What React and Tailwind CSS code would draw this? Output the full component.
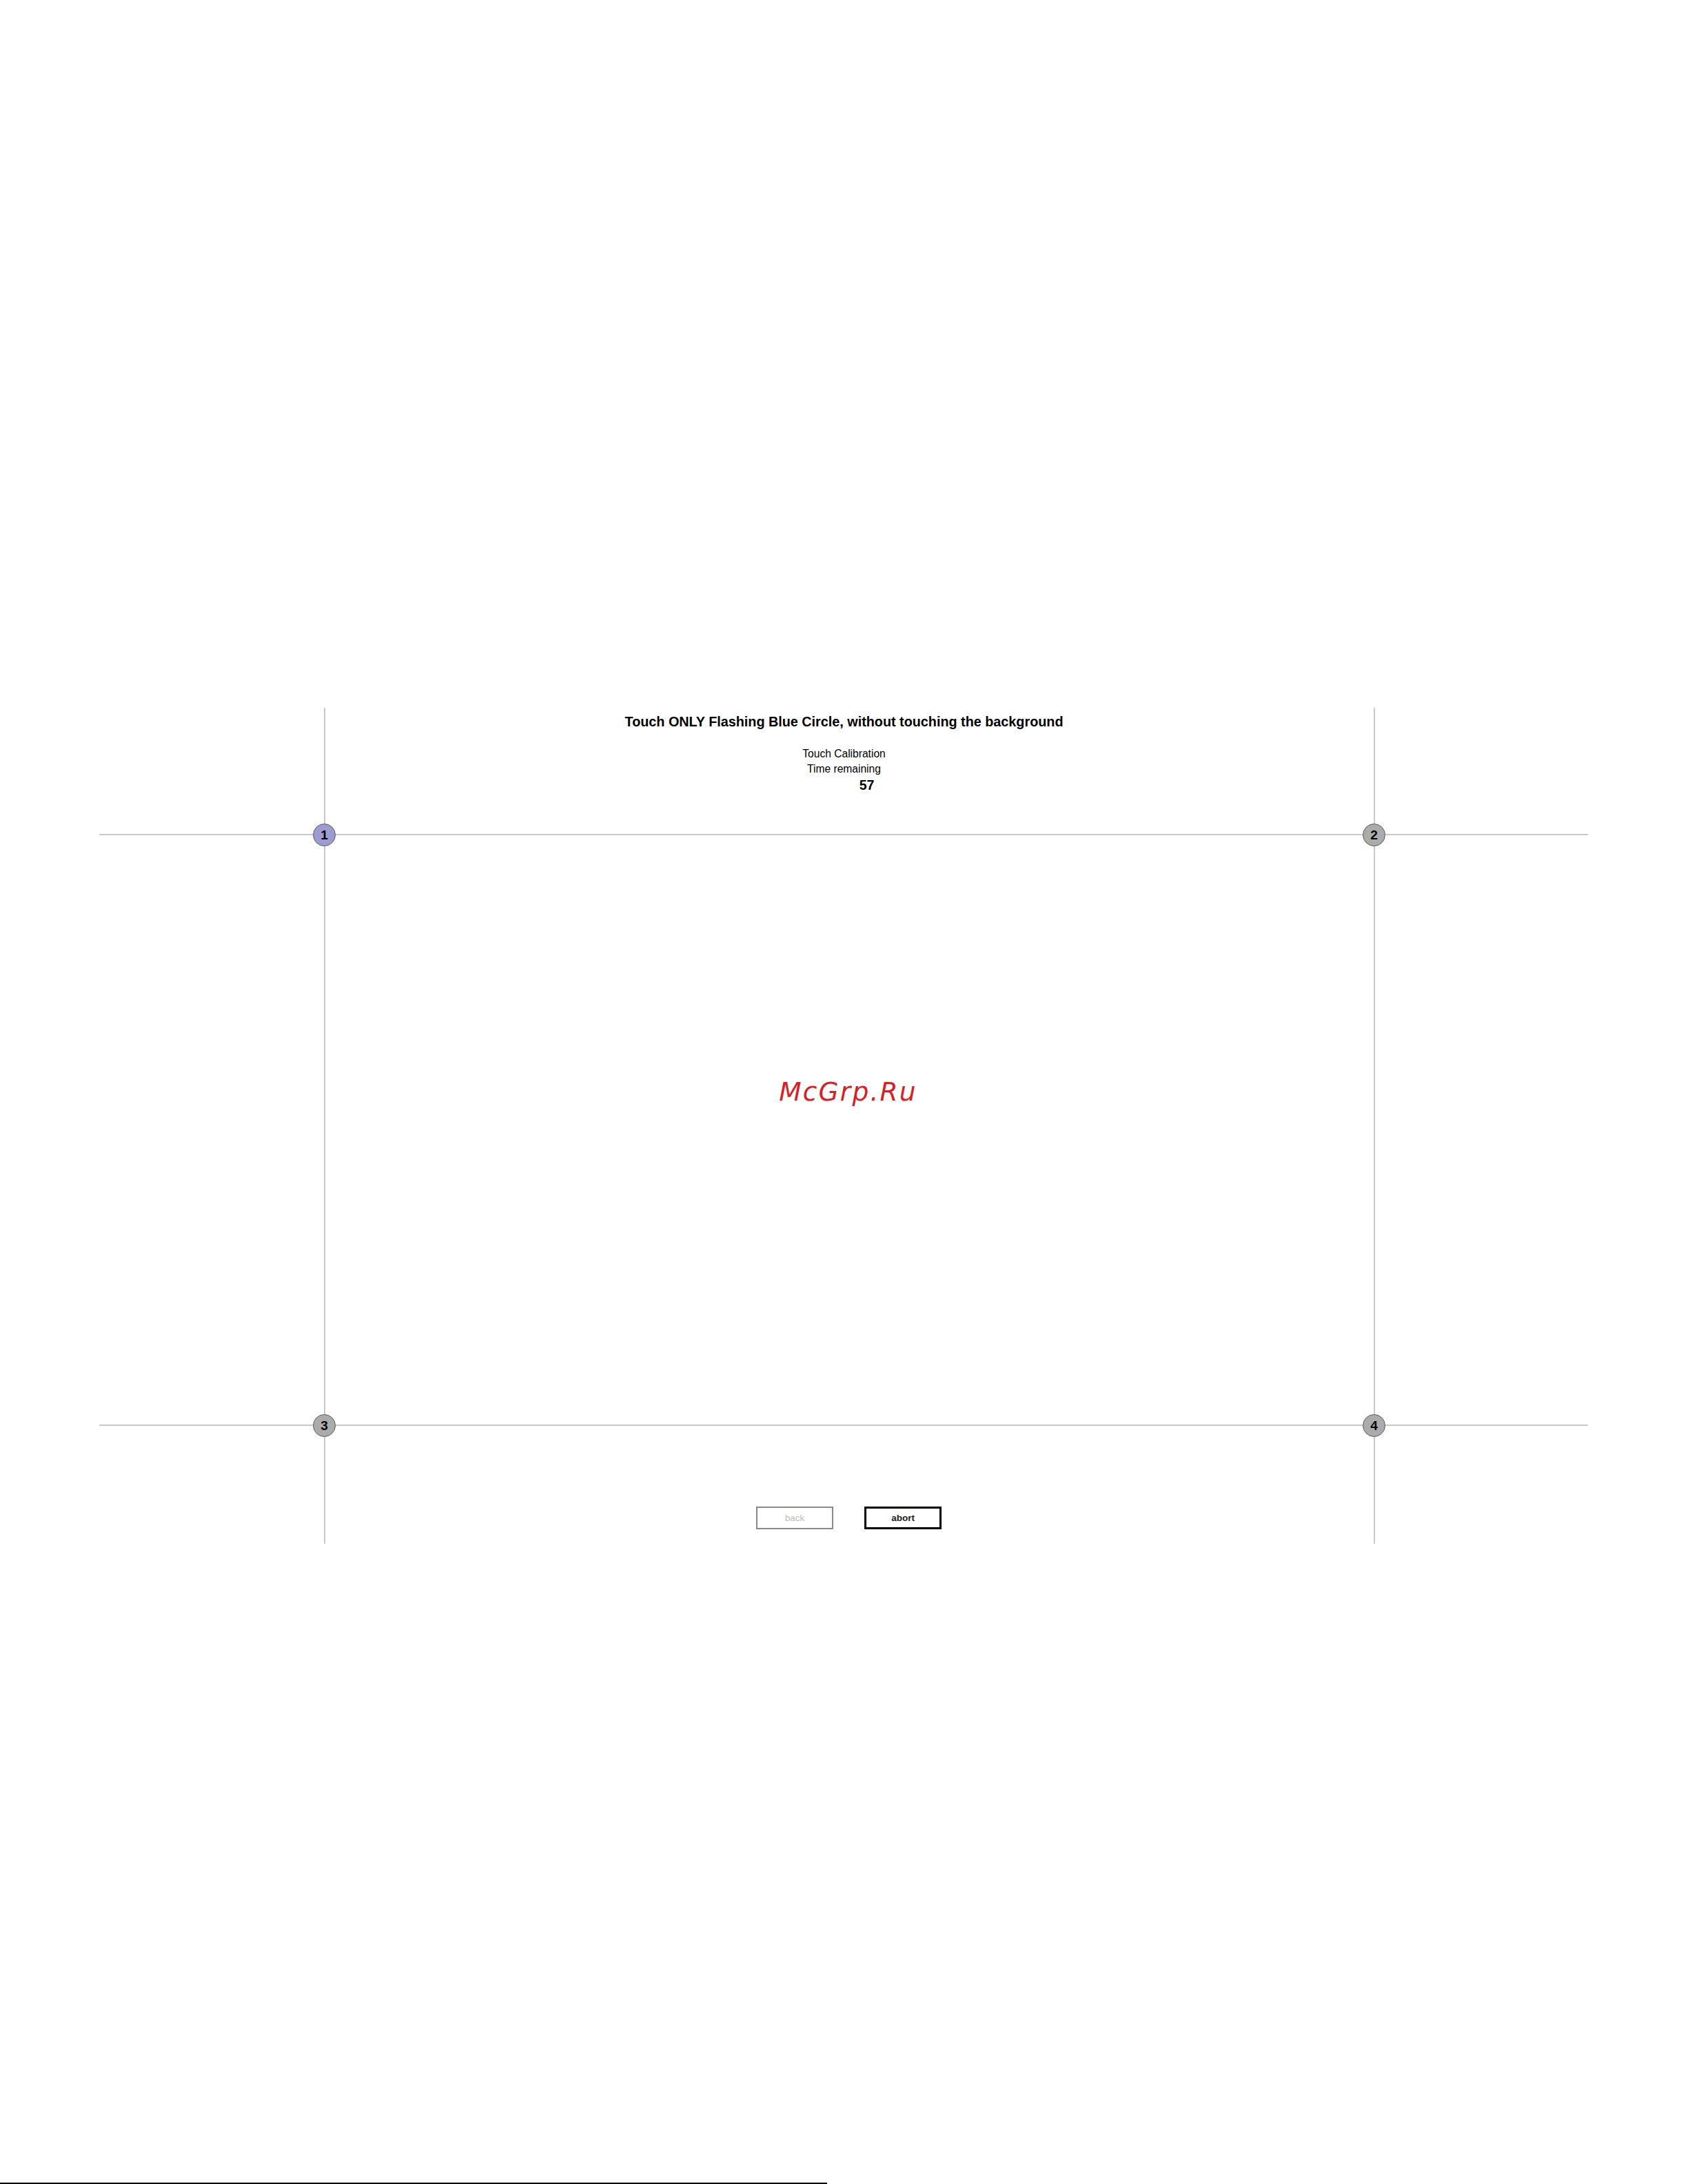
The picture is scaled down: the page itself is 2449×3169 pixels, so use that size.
import React from "react";

function Target({ n, left, top, active }) {
  return (
    <div
      className={
        "absolute flex items-center justify-center w-[33px] h-[33px] rounded-full border-[1.5px] border-[#5a5a5a] text-[19px] font-bold leading-none text-black " +
        (active ? "bg-[#9c9cd2]" : "bg-[#ababab]")
      }
      style={{ left, top }}
    >
      {n}
    </div>
  );
}

export default function App() {
  return (
    <div className="relative w-[2449px] h-[3169px] bg-white overflow-hidden font-['Liberation_Sans',Arial,sans-serif] text-black">
      {/* crosshair lines */}
      <div className="absolute left-[469.5px] top-[1027px] w-[2px] h-[1213px] bg-[#c9c9c9]" />
      <div className="absolute left-[1993px] top-[1027px] w-[2px] h-[1213px] bg-[#c9c9c9]" />
      <div className="absolute left-[144px] top-[1210px] w-[2160px] h-[2px] bg-[#c9c9c9]" />
      <div className="absolute left-[144px] top-[2067px] w-[2160px] h-[2px] bg-[#c9c9c9]" />

      {/* flow content */}
      <div className="relative flex flex-col items-center pt-[1036px]">
        <h1 className="text-[19.8px] leading-[23px] font-bold">
          Touch ONLY Flashing Blue Circle, without touching the background
        </h1>
        <div className="mt-[23.6px] text-[15.6px] leading-[22px]">Touch Calibration</div>
        <div className="text-[15.6px] leading-[22px]">Time remaining</div>
        <div className="mt-[1.6px] pl-[66px] text-[19.5px] leading-[22px] font-bold">57</div>

        <div className="mt-[413px] pl-[12px] font-['DejaVu_Sans',sans-serif] italic text-[37.5px] leading-[43px] tracking-[2.2px] text-[#d61f26]">
          McGrp.Ru
        </div>

        <div className="mt-[580px] pl-[14px] flex flex-row gap-[45px]">
          <button className="box-border w-[112px] h-[33px] border-2 border-[#8a8a8a] bg-white text-[13.5px] text-[#bdbdbd] leading-none">
            back
          </button>
          <button className="box-border w-[112px] h-[33px] border-[3px] border-black bg-white text-[13.5px] font-bold text-[#222] leading-none">
            abort
          </button>
        </div>
      </div>

      {/* calibration targets */}
      <Target n="1" left={454} top={1195} active />
      <Target n="2" left={1977} top={1195} />
      <Target n="3" left={454} top={2052} />
      <Target n="4" left={1977} top={2052} />

      {/* bottom edge bar */}
      <div className="absolute left-0 bottom-0 w-[1200px] h-[2px] bg-black" />
    </div>
  );
}
